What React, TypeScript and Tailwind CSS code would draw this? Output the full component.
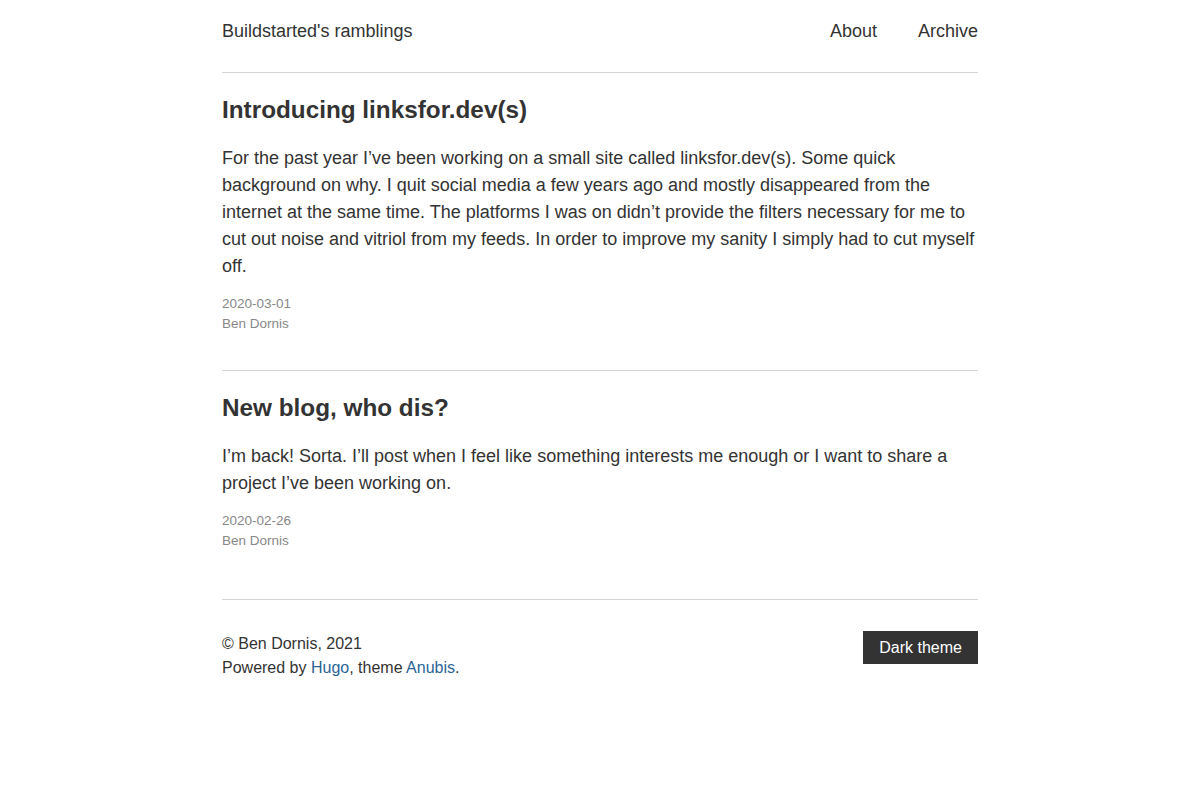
export default function App() {
  const posts = [
    {
      title: "Introducing linksfor.dev(s)",
      body: "For the past year I\u2019ve been working on a small site called linksfor.dev(s). Some quick background on why. I quit social media a few years ago and mostly disappeared from the internet at the same time. The platforms I was on didn\u2019t provide the filters necessary for me to cut out noise and vitriol from my feeds. In order to improve my sanity I simply had to cut myself off.",
      date: "2020-03-01",
    },
    {
      title: "New blog, who dis?",
      body: "I\u2019m back! Sorta. I\u2019ll post when I feel like something interests me enough or I want to share a project I\u2019ve been working on.",
      date: "2020-02-26",
    },
  ];

  return (
    <div className="min-h-screen bg-white text-[#333] font-['Liberation_Sans',Arial,sans-serif]">
      <div className="mx-auto w-[756px]">
        {/* header */}
        <header className="flex items-center justify-between pt-[18px] pb-[27px] text-[18px] leading-[27px]">
          <a href="#" className="text-[#333]">Buildstarted's ramblings</a>
          <nav className="flex gap-[41px]">
            <a href="#">About</a>
            <a href="#">Archive</a>
          </nav>
        </header>

        <main>
          {posts.map((p, i) => (
            <article
              key={p.title}
              className={`border-t border-[#d4d4d4] ${i === posts.length - 1 ? "pb-[48px]" : "pb-[36px]"}`}
            >
              <h2 className="mt-[22px] text-[24.3px] leading-[30px] font-bold">{p.title}</h2>
              <p className="mt-[20px] text-[18px] leading-[27px]">{p.body}</p>
              <div className="mt-[14px] text-[13.5px] leading-[20px] text-[#888]">
                <div>{p.date}</div>
                <div>Ben Dornis</div>
              </div>
            </article>
          ))}
        </main>

        {/* footer */}
        <footer className="flex items-start justify-between border-t border-[#d4d4d4] pt-[31px] text-[16px] leading-[24px]">
          <div className="pt-px">
            <div>© Ben Dornis, 2021</div>
            <div>
              Powered by <a href="#" className="text-[#2a6496]">Hugo</a>, theme{" "}
              <a href="#" className="text-[#2a6496]">Anubis</a>.
            </div>
          </div>
          <button className="h-[33px] bg-[#333] px-[16px] text-[16px] text-white">Dark theme</button>
        </footer>
      </div>
    </div>
  );
}
